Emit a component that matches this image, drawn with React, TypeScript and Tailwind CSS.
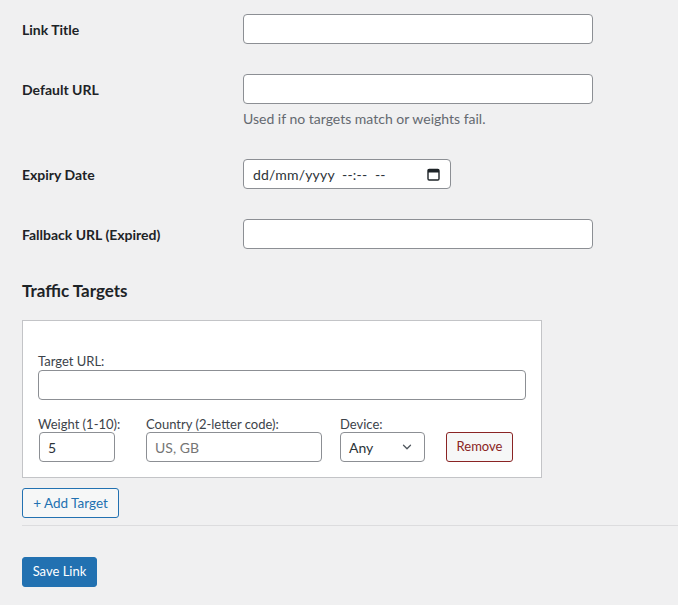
import React from 'react';
import { ChevronDown } from 'lucide-react';

const font = { fontFamily: 'Lato, "Noto Sans", sans-serif' };

const fields = [
  { label: 'Link Title', width: 'w-[350px]' },
  { label: 'Default URL', width: 'w-[350px]', note: 'Used if no targets match or weights fail.' },
  { label: 'Expiry Date', date: true },
  { label: 'Fallback URL (Expired)', width: 'w-[350px]' },
];

const inputCls =
  'h-[30px] rounded-[4px] border border-[#8c8f94] bg-white px-2 text-[14px] text-[#2c3338] outline-none';

const CalendarIcon = () => (
  <svg width="13" height="13" viewBox="0 0 13 13" fill="none">
    <rect x="1" y="1.5" width="11" height="10.5" rx="1.2" stroke="#1d2327" strokeWidth="1.4" />
    <rect x="1" y="1.5" width="11" height="3" fill="#1d2327" />
  </svg>
);

const FieldRow = ({ field }: { field: (typeof fields)[number] }) => (
  <div className="flex py-[15px]">
    <div className="flex h-[30px] w-[221px] shrink-0 items-center text-[14px] font-bold text-[#1d2327]">
      {field.label}
    </div>
    <div>
      {field.date ? (
        <div className={`${inputCls} flex w-[208px] items-center justify-between pr-[10px]`}>
          <span className="pl-px tracking-[0.2px]">dd/mm/yyyy&nbsp; --:-- &nbsp;--</span>
          <CalendarIcon />
        </div>
      ) : (
        <input className={`${inputCls} ${field.width} block`} />
      )}
      {field.note && (
        <p className="mt-[5px] text-[14px] leading-5 text-[#646970]">{field.note}</p>
      )}
    </div>
  </div>
);

export default function App() {
  return (
    <div className="min-h-[605px] overflow-hidden bg-[#f0f0f1] pl-[22px]" style={font}>
      <div className="-mt-px">
        {fields.map((f) => (
          <FieldRow key={f.label} field={f} />
        ))}
      </div>

      <h2 className="mt-[16px] text-[17px] leading-[22px] font-bold text-[#1d2327]">Traffic Targets</h2>

      <div className="mt-[18px] w-[520px] border border-[#c3c4c7] bg-white px-[15px] pt-[31px] pb-[15px]">
        <label className="block text-[13px] leading-[18px] text-[#3c434a]">Target URL:</label>
        <input className={`${inputCls} block w-[488px]`} />

        <div className="mt-[16px] flex items-end">
          <div className="w-[108px]">
            <label className="block text-[13px] leading-4 text-[#3c434a]">Weight (1-10):</label>
            <input className={`${inputCls} ml-px block w-[76px]`} defaultValue="5" />
          </div>
          <div className="w-[194px]">
            <label className="block text-[13px] leading-4 text-[#3c434a]">Country (2-letter code):</label>
            <input className={`${inputCls} block w-[176px] placeholder:text-[#757575]`} placeholder="US, GB" />
          </div>
          <div className="w-[106px]">
            <label className="block text-[13px] leading-4 text-[#3c434a]">Device:</label>
            <div className={`${inputCls} flex w-[85px] items-center justify-between pr-[10px]`}>
              <span>Any</span>
              <ChevronDown size={14} strokeWidth={2.2} color="#50575e" />
            </div>
          </div>
          <button className="h-[30px] w-[67px] rounded-[3px] border border-[#8a2424] bg-[#f6f7f7] text-[13px] text-[#8a2424]">
            Remove
          </button>
        </div>
      </div>

      <button className="mt-[10px] h-[30px] w-[97px] rounded-[3px] border border-[#2271b1] bg-[#f6f7f7] text-[13.5px] text-[#2271b1]">
        + Add Target
      </button>

      <hr className="mt-[7px] border-0 border-t border-[#dcdcde]" />

      <button className="mt-[31px] h-[30px] w-[75px] rounded-[3px] border border-[#2271b1] bg-[#2271b1] text-[13px] text-white">
        Save Link
      </button>
    </div>
  );
}
